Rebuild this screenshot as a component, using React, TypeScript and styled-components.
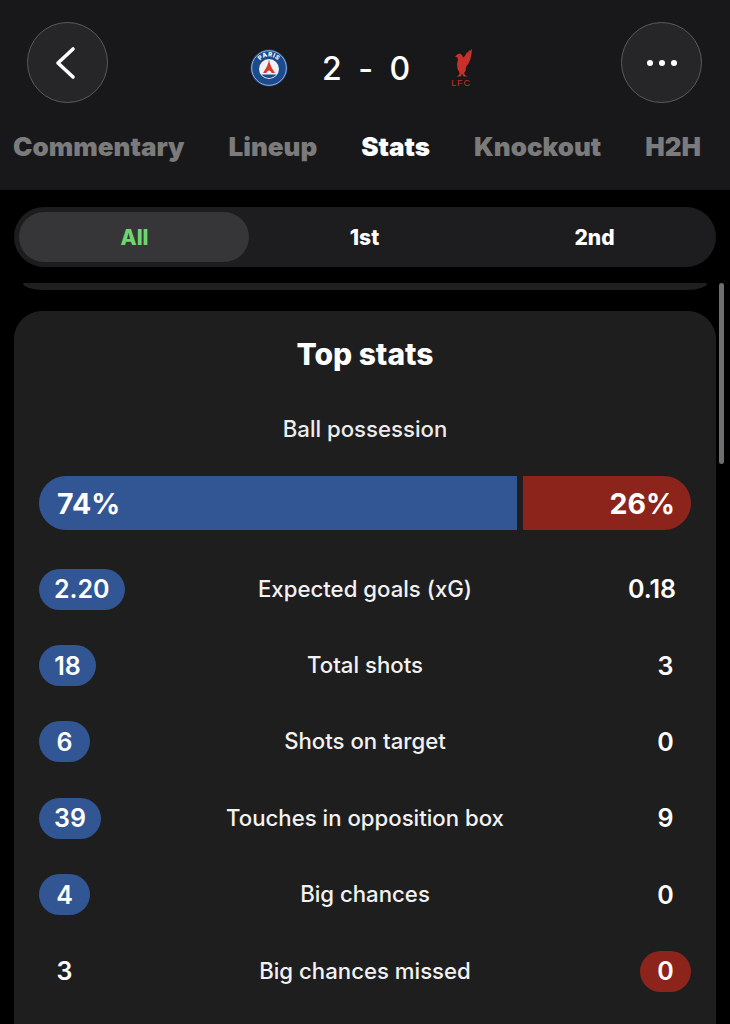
import React from 'react';
import styled, { createGlobalStyle } from 'styled-components';

const Global = createGlobalStyle`
  html, body { margin: 0; padding: 0; background: #000; }
  body { width: 730px; height: 1024px; overflow: hidden; font-family: Inter, "Liberation Sans", sans-serif; color: #fff; }
  * { box-sizing: border-box; }
`;

const Page = styled.div`
  width: 730px;
  height: 1024px;
  overflow: hidden;
  position: relative;
  background: #000;
`;

const Header = styled.header`
  height: 190px;
  background: #18181a;
  display: flex;
  flex-direction: column;
  padding-top: 22px;
`;

const TopBar = styled.div`
  display: flex;
  align-items: flex-start;
  justify-content: space-between;
  padding: 0 28px 0 27px;
  height: 82px;
`;

const RoundButton = styled.button`
  width: 81px;
  height: 81px;
  border-radius: 50%;
  border: 1.5px solid #5a5a5c;
  background: #262628;
  color: #fff;
  padding: 0;
  display: flex;
  align-items: center;
  justify-content: center;
`;

const Score = styled.div`
  display: flex;
  align-items: center;
  width: 223px;
  height: 38px;
  margin: 27px 6px 0 0;
  justify-content: space-between;
`;

const ScoreText = styled.span`
  font-size: 32px;
  font-weight: 500;
  line-height: 40px;
  letter-spacing: 1px;
  word-spacing: 6px;
  white-space: pre;
  margin-right: 4px;
  padding-top: 2px;
`;

const Tabs = styled.nav`
  display: flex;
  align-items: center;
  justify-content: space-between;
  padding: 0 29px 0 13px;
  margin-top: 28px;
`;

const Tab = styled.span<{ $active?: boolean }>`
  font-size: 26px;
  font-weight: 900;
  line-height: 30px;
  color: ${p => (p.$active ? '#fff' : '#7b7b7b')};
`;

const Segments = styled.div`
  margin: 17px 14px 0;
  height: 60px;
  padding: 5px;
  border-radius: 30px;
  background: #1d1d1f;
  display: grid;
  grid-template-columns: repeat(3, 230px);
`;

const Segment = styled.div<{ $active?: boolean }>`
  border-radius: 25px;
  display: flex;
  align-items: center;
  justify-content: center;
  padding-left: 1px;
  font-size: 21px;
  font-weight: 800;
  background: ${p => (p.$active ? '#363638' : 'transparent')};
  color: ${p => (p.$active ? '#6fd66f' : '#fff')};
`;

const Sliver = styled.div`
  margin: 16px 23px 0;
  height: 7px;
  background: #1f1f21;
  border-radius: 0 0 20px 20px / 0 0 7px 7px;
`;

const Card = styled.section`
  margin: 21px 14px 0;
  height: 760px;
  padding: 24px 25px 0;
  border-radius: 28px;
  background: #1e1e1f;
  display: flex;
  flex-direction: column;
`;

const CardTitle = styled.h2`
  margin: 0;
  text-align: center;
  font-size: 30px;
  line-height: 38px;
  font-weight: 800;
`;

const PossessionLabel = styled.div`
  margin-top: 41px;
  text-align: center;
  font-size: 22.2px;
  line-height: 30px;
  font-weight: 500;
  color: #ededed;
`;

const PossessionBar = styled.div`
  margin-top: 32px;
  height: 54px;
  display: grid;
  grid-template-columns: 478px 168px;
  justify-content: space-between;
`;

const BarSide = styled.div<{ $side: 'home' | 'away' }>`
  display: flex;
  align-items: center;
  padding: 0 ${p => (p.$side === 'home' ? 18 : 16)}px 0 18px;
  font-size: 28.5px;
  font-weight: 700;
  justify-content: ${p => (p.$side === 'home' ? 'flex-start' : 'flex-end')};
  background: ${p => (p.$side === 'home' ? '#325693' : '#8d241b')};
  border-radius: ${p => (p.$side === 'home' ? '27px 0 0 27px' : '0 27px 27px 0')};
`;

const Rows = styled.div`
  margin-top: 21px;
  display: flex;
  flex-direction: column;
`;

const Row = styled.div`
  height: 76.4px;
  display: grid;
  grid-template-columns: 120px 1fr 120px;
  align-items: center;
`;

const RowLabel = styled.div`
  text-align: center;
  font-size: 22.2px;
  font-weight: 500;
  white-space: nowrap;
  color: #f2f2f2;
  padding-bottom: 2px;
`;

const ValueCell = styled.div<{ $side: 'home' | 'away' }>`
  display: flex;
  justify-content: ${p => (p.$side === 'home' ? 'flex-start' : 'flex-end')};
`;

const Value = styled.span<{ $tone?: 'home' | 'away'; $min?: number }>`
  min-width: ${p => p.$min ?? 51}px;
  height: 41px;
  padding: 0 15px;
  border-radius: 21px;
  display: flex;
  align-items: center;
  justify-content: center;
  font-size: 25px;
  font-weight: 600;
  background: ${p => (p.$tone === 'home' ? '#325693' : p.$tone === 'away' ? '#8d241b' : 'transparent')};
`;

const Scrollbar = styled.div`
  position: absolute;
  left: 719px;
  top: 283px;
  width: 5px;
  height: 181px;
  border-radius: 3px;
  background: #6e6e70;
`;

const PsgLogo = () => (
  <svg width="38" height="38" viewBox="0 0 38 38">
    <circle cx="19" cy="19" r="18.500" fill="#1b4b8c" />
    <circle cx="19" cy="19" r="17.300" fill="none" stroke="#cfd6e4" strokeWidth="0.7" />
    <circle cx="19" cy="20" r="10" fill="#f0f1f4" />
    <path id="psgArc" d="M7.500 19a11.500 11.500 0 0 1 23 0" fill="none" />
    <text fontFamily="Inter, sans-serif" fontSize="6" fontWeight="800" fill="#fff" letterSpacing="0.5">
      <textPath href="#psgArc" startOffset="50%" textAnchor="middle">PARIS</textPath>
    </text>
    <path d="M19 10.500c.5 4.500 2.800 8.700 6 13.500h-3.300c-.7-1.700-1.500-2.600-2.700-2.600s-2 .9-2.700 2.600H13c3.200-4.800 5.500-9 6-13.500z" fill="#d8392b" />
    <path d="M11.500 25.500h15a9.800 9.800 0 0 1-15 0z" fill="#1b4b8c" />
  </svg>
);

const LfcLogo = () => (
  <svg width="24" height="40" viewBox="0 0 24 40" style={{ marginTop: -1 }}>
    <path
      d="M6 9 8 6.500 11 5.500 13 7 14 9.500 16 8 18 4 19 5 20 2 21 3 23 .8 22.500 6 21.500 11 19.500 15.500 17 19 16.500 23 15 25 16 27 18.500 28.500H14.500L13 25.500 12 28.500H7.500L10 27 10.500 24.500 8.500 21 8 16 9 11.500 8 9Z"
      fill="#c8302a"
    />
    <text x="12" y="38" textAnchor="middle" fontFamily="'Liberation Sans', sans-serif" fontSize="9" fill="#c8302a" letterSpacing="0.8">LFC</text>
  </svg>
);

const stats: Array<[string, string, string, 'home' | 'away', number?]> = [
  ['2.20', 'Expected goals (xG)', '0.18', 'home'],
  ['18', 'Total shots', '3', 'home', 57],
  ['6', 'Shots on target', '0', 'home'],
  ['39', 'Touches in opposition box', '9', 'home', 61],
  ['4', 'Big chances', '0', 'home'],
  ['3', 'Big chances missed', '0', 'away'],
];

export default function App() {
  return (
    <Page>
      <Global />
      <Header>
        <TopBar>
          <RoundButton aria-label="Back">
            <svg width="24" height="34" viewBox="0 0 24 34" fill="none" stroke="#fff" strokeWidth="3.6" strokeLinecap="round" strokeLinejoin="round" style={{ marginLeft: -3 }}>
              <path d="M19 3 4 17l15 14" />
            </svg>
          </RoundButton>
          <Score>
            <PsgLogo />
            <ScoreText>2 - 0</ScoreText>
            <LfcLogo />
          </Score>
          <RoundButton aria-label="More">
            <svg width="30" height="8" viewBox="0 0 30 8" fill="#fff">
              <circle cx="3" cy="4" r="3" /><circle cx="15" cy="4" r="3" /><circle cx="27" cy="4" r="3" />
            </svg>
          </RoundButton>
        </TopBar>
        <Tabs>
          <Tab>Commentary</Tab>
          <Tab>Lineup</Tab>
          <Tab $active>Stats</Tab>
          <Tab>Knockout</Tab>
          <Tab>H2H</Tab>
        </Tabs>
      </Header>
      <Segments>
        <Segment $active>All</Segment>
        <Segment>1st</Segment>
        <Segment>2nd</Segment>
      </Segments>
      <Sliver />
      <Card>
        <CardTitle>Top stats</CardTitle>
        <PossessionLabel>Ball possession</PossessionLabel>
        <PossessionBar>
          <BarSide $side="home">74%</BarSide>
          <BarSide $side="away">26%</BarSide>
        </PossessionBar>
        <Rows>
          {stats.map(([a, label, b, winner, min]) => (
            <Row key={label}>
              <ValueCell $side="home">
                <Value $tone={winner === 'home' ? 'home' : undefined} $min={min}>{a}</Value>
              </ValueCell>
              <RowLabel>{label}</RowLabel>
              <ValueCell $side="away">
                <Value $tone={winner === 'away' ? 'away' : undefined}>{b}</Value>
              </ValueCell>
            </Row>
          ))}
        </Rows>
      </Card>
      <Scrollbar />
    </Page>
  );
}
